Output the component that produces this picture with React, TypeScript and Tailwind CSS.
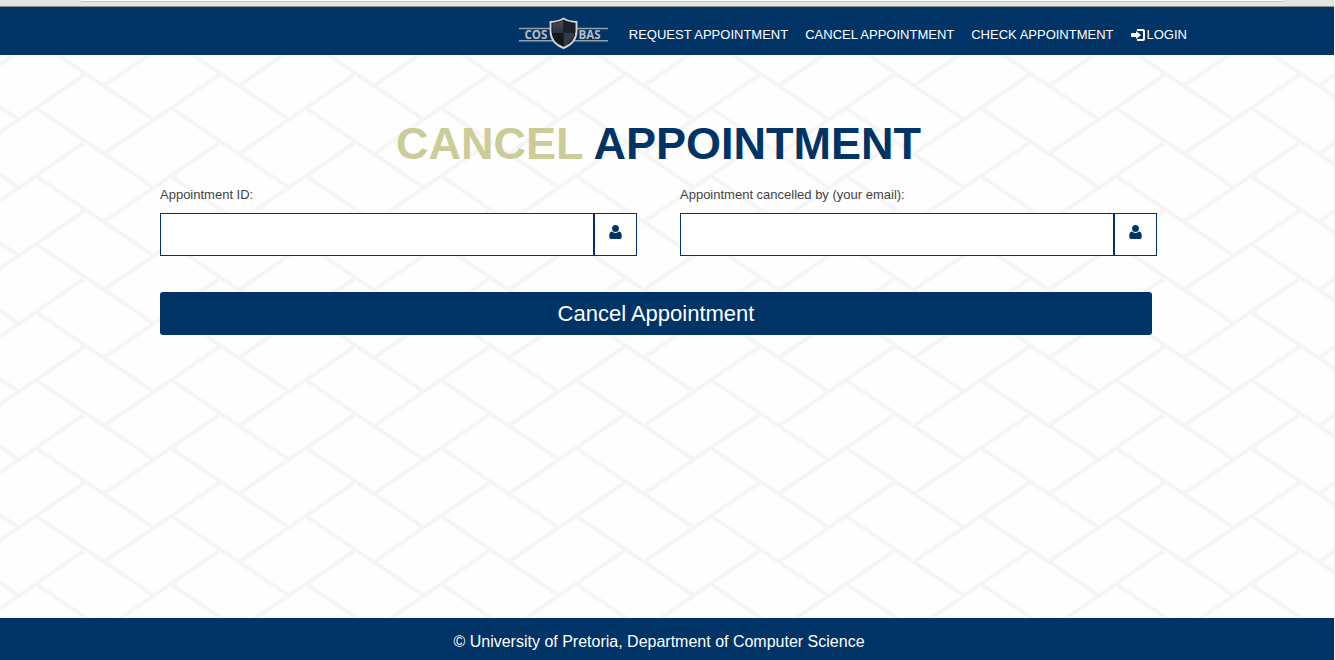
import React from "react";

function PageBackground() {
  return (
    <svg aria-hidden="true" className="absolute inset-0 h-full w-full">
      <defs>
        <pattern id="weave" width="135" height="68" x="36" y="108" patternUnits="userSpaceOnUse">
          <g fill="none" stroke="#f5f5f5" strokeWidth="4">
            <path d="M0 0L117 79M0 -68L117 11M-135 0L-18 79M-135 -68L-18 11" />
            <path d="M69 45L183 -33M69 113L183 35M-66 45L48 -33M-66 113L48 35" />
          </g>
        </pattern>
      </defs>
      <rect width="100%" height="100%" fill="#fefefe" />
      <rect width="100%" height="100%" fill="url(#weave)" />
    </svg>
  );
}

function Logo() {
  return (
    <svg viewBox="0 0 89 32" className="h-8 w-[89px]" role="img" aria-label="COSBAS">
      <defs>
        <linearGradient id="steel" x1="0" y1="0" x2="0" y2="1">
          <stop offset="0" stopColor="#46505f" />
          <stop offset="1" stopColor="#2a303b" />
        </linearGradient>
      </defs>
      <path d="M0 11.5H89M0 23.7H89" stroke="#94a0ab" strokeWidth="1.5" />
      <g fill="#b8bdc1" fontFamily="Open Sans, Noto Sans, sans-serif" fontWeight="700" fontSize="11.5">
        <text x="5.5" y="22">COS</text>
        <text x="59.500" y="22">BAS</text>
      </g>
      <path
        d="M44.500 1.500Q50 4.800 57.500 5V14C57.500 22 52 28 44.500 31C37 28 31.500 22 31.500 14V5Q39 4.800 44.500 1.500Z"
        fill="#111419"
        stroke="#d3d3d3"
        strokeWidth="1.900"
      />
      <path d="M44.500 3.500Q39.500 6.300 33.300 6.500V16H44.500Z" fill="url(#steel)" />
      <path d="M44.500 3.500Q49.500 6.300 55.700 6.500V16H44.500Z" fill="#1d2129" />
      <path d="M44.500 16H55.500C54.500 22 50.500 26.500 44.500 29Z" fill="#343a46" />
      <path d="M44.500 16H33.500C34.500 22 38.500 26.500 44.500 29Z" fill="#15181f" />
    </svg>
  );
}

function LoginIcon() {
  return (
    <svg viewBox="0 0 14 12" aria-hidden="true" className="h-3 w-3.5" fill="currentColor">
      <path d="M6 0H12Q14 0 14 2V10Q14 12 12 12H6V10H11Q12 10 12 9V3Q12 2 11 2H6Z" />
      <path d="M5 2L10 6L5 10V8H1Q0 8 0 7V5Q0 4 1 4H5Z" />
    </svg>
  );
}

function UserIcon() {
  return (
    <svg viewBox="0 0 13 14" aria-hidden="true" className="h-3.5 w-[13px]" fill="currentColor">
      <ellipse cx="6.500" cy="3.500" rx="3.400" ry="3.500" />
      <path d="M2.800 6.500Q4.300 7.900 6.500 7.900Q8.700 7.900 10.200 6.500C12.200 6.700 12.800 9 12.800 11.500Q12.800 14 10.700 14H2.300Q0.200 14 0.200 11.500C0.200 9 0.800 6.700 2.800 6.500Z" />
    </svg>
  );
}

function Field({ id, label, type }: { id: string; label: string; type: string }) {
  return (
    <div className="min-w-0">
      <label htmlFor={id} className="block text-[13px] leading-5 text-[#444444]">
        {label}
      </label>
      <div className="mt-2 flex h-[43px] bg-white text-[#003366]">
        <input
          id={id}
          type={type}
          className="min-w-0 flex-1 border border-[#003366] bg-white px-3 text-sm outline-none"
        />
        <span className="flex w-[43px] justify-center border border-[#003366] pt-[11px]">
          <UserIcon />
        </span>
      </div>
    </div>
  );
}

const links = ["REQUEST APPOINTMENT", "CANCEL APPOINTMENT", "CHECK APPOINTMENT"];

export default function App() {
  return (
    <div className="relative flex min-h-screen flex-col border-r border-[#ececec] font-['Liberation_Sans',Arial,sans-serif]">
      <PageBackground />
      <div className="relative h-[7px] border-b border-[#8f8f8b] bg-[#e4e4e2] pr-[51px] pl-20">
        <div className="h-0.5 rounded-b-sm border-b border-[#bcc0bc] bg-white" />
      </div>
      <header className="relative bg-[#003366] pr-4">
        <nav className="mx-auto flex h-12 w-full max-w-[1056px] items-center justify-end gap-[17px] pt-[7px] text-[13px] leading-5 text-white">
          <a href="#home" className="mr-1 -mt-1">
            <Logo />
          </a>
          {links.map((text) => (
            <a key={text} href="#" className="whitespace-nowrap">
              {text}
            </a>
          ))}
          <a href="#login" className="flex items-center gap-0.5">
            <LoginIcon />
            LOGIN
          </a>
        </nav>
      </header>
      <main className="relative flex-1 pr-[17px]">
        <div className="mx-auto w-full max-w-[997px] pt-[63px]">
          <h1 className="text-center text-[45px] leading-[52px] font-bold text-[#003366]">
            <span className="text-[#cccc99]">CANCEL</span> APPOINTMENT
          </h1>
          <form className="mt-[15px]">
            <div className="grid grid-cols-2 gap-[43px]">
              <Field id="appointment-id" label="Appointment ID:" type="text" />
              <Field id="cancelled-by" label="Appointment cancelled by (your email):" type="email" />
            </div>
            <div className="mt-9 pr-[5px]">
              <button
                type="button"
                className="block h-[43px] w-full rounded-[3px] bg-[#003366] text-[22px] leading-[30px] text-white"
              >
                Cancel Appointment
              </button>
            </div>
          </form>
        </div>
      </main>
      <footer className="relative flex h-[42px] items-center justify-center bg-[#003366] pt-[5px] pr-4 text-base text-white">
        © University of Pretoria, Department of Computer Science
      </footer>
    </div>
  );
}
